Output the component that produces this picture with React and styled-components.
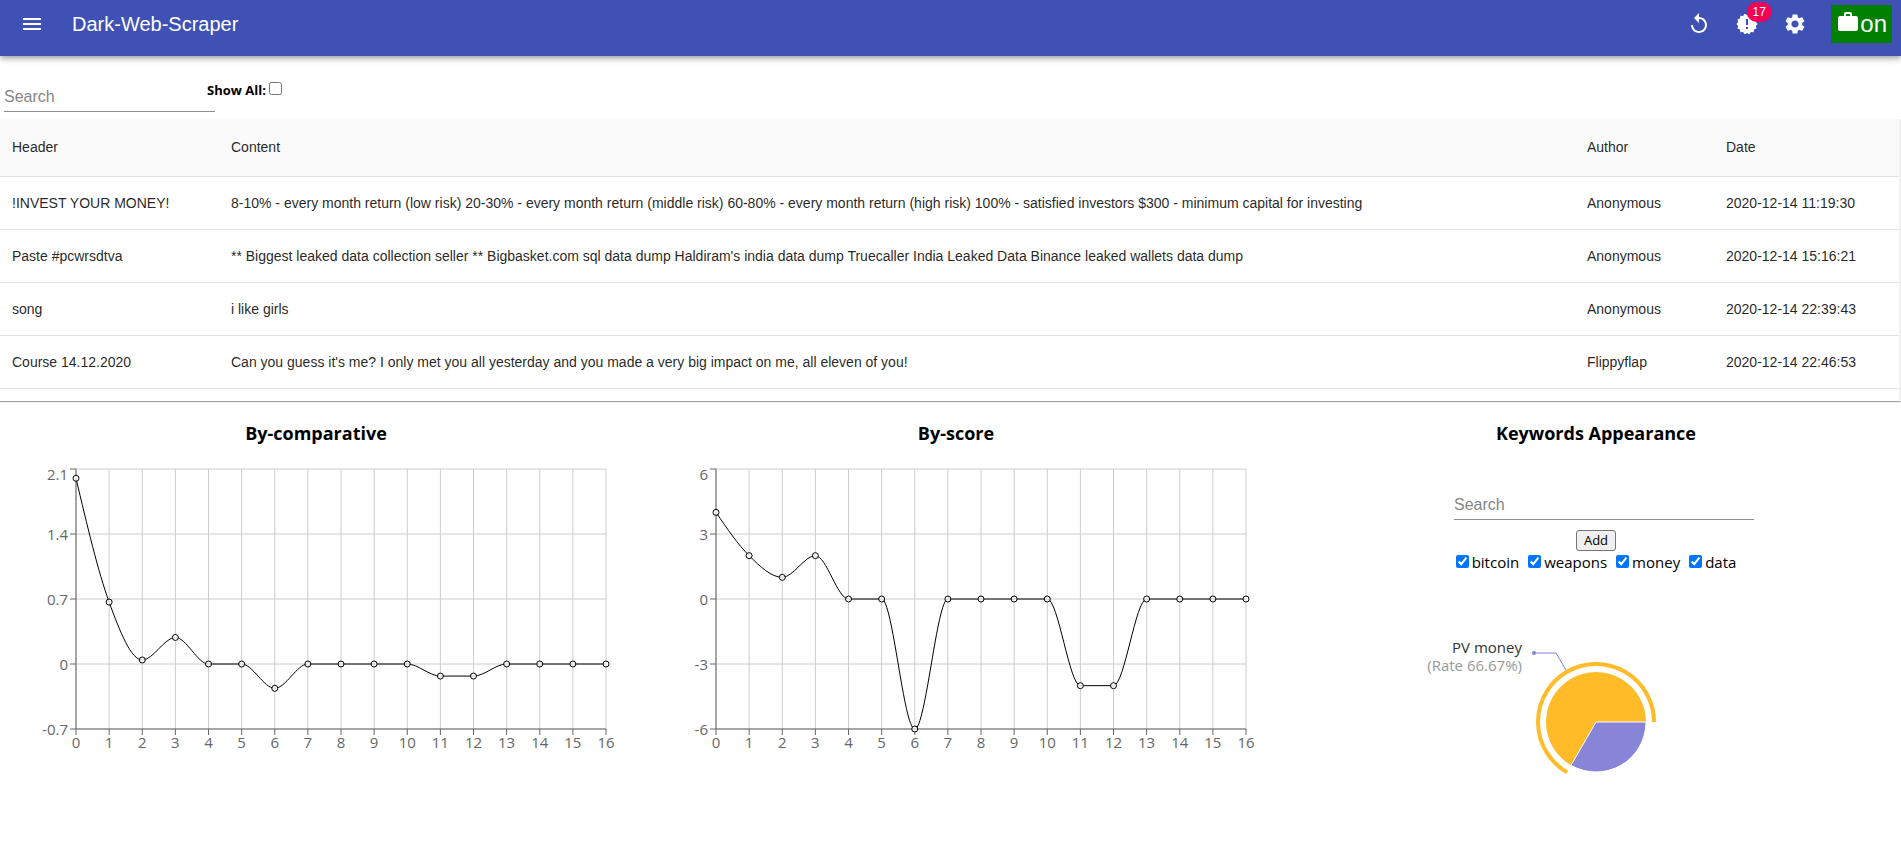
import React, { useState } from "react";
import styled, { createGlobalStyle } from "styled-components";
import { MdMenu, MdReplay, MdSettings, MdWork } from "react-icons/md";

const sans = `"Liberation Sans", Arial, sans-serif`;
const ui = `"Open Sans", "Noto Sans", sans-serif`;

const GlobalStyle = createGlobalStyle`
  * { box-sizing: border-box; }
  body { margin: 0; background: #fff; color: #000; font-family: ${ui}; font-size: 15px; }
`;

const AppBar = styled.header`
  position: relative;
  z-index: 1;
  display: flex;
  align-items: flex-start;
  height: 56px;
  padding: 0 9px 0 8px;
  background: #3f51b5;
  color: #fff;
  box-shadow: 0 2px 4px -1px rgba(0, 0, 0, 0.2), 0 4px 5px 0 rgba(0, 0, 0, 0.14),
    0 1px 10px 0 rgba(0, 0, 0, 0.12);
`;

const IconButton = styled.button`
  display: flex;
  padding: 12px;
  border: 0;
  background: none;
  color: inherit;
  font-size: 24px;
  cursor: pointer;
`;

const BadgeAnchor = styled.span`
  position: relative;
  display: flex;
`;

const Badge = styled.span`
  position: absolute;
  top: 0;
  right: 0;
  height: 20px;
  min-width: 20px;
  padding: 0 6px;
  border-radius: 10px;
  background: #f50057;
  font: 12px/20px ${sans};
  transform: translate(50%, -50%);
`;

const Brand = styled.h1`
  flex: 1;
  margin: 0 0 0 16px;
  font: 20px/48px ${sans};
`;

const StatusButton = styled.button`
  display: flex;
  align-items: center;
  margin: 5px 0 0 12px;
  padding: 5px;
  border: 0;
  background: #008000;
  color: #fff;
  font: 24px/28px ${sans};
  cursor: pointer;

  svg { margin-bottom: 4px; }
`;

const FilterBar = styled.div`
  display: flex;
  align-items: flex-end;
  height: 63px;
  padding: 0 4px 7px;
`;

const SearchInput = styled.input`
  display: block;
  width: ${(p) => p.$width};
  height: 32px;
  padding: 8px 0 5px;
  border: 0;
  border-bottom: 1px solid #8e8e8e;
  border-radius: 0;
  background: none;
  font: 16px/19px ${sans};
  outline: none;

  &::placeholder { color: #868686; opacity: 1; }
`;

const ShowAll = styled.label`
  display: flex;
  align-items: center;
  gap: 3px;
  margin: 0 0 12px -8px;
  font-size: 13px;
  line-height: 20px;
  font-weight: 700;

  input { margin: 0 0 3px; }
`;

const TableScroller = styled.div`
  height: 283px;
  overflow: hidden;
  border-right: 2px solid #f1f1f1;
  border-bottom: 1px solid #9ea09e;
  box-shadow: 0 1px 1px rgba(0, 0, 0, 0.06);
`;

const Table = styled.table`
  width: 100%;
  border-collapse: separate;
  border-spacing: 0;
  table-layout: fixed;
  color: rgba(0, 0, 0, 0.87);
  font: 14px/20px ${sans};

  th, td {
    padding: 16px 12px;
    border-bottom: 1px solid #e0e0e0;
    text-align: left;
    font-weight: 400;
    white-space: nowrap;
  }
  th { background: #fafafa; line-height: 25px; }
`;

const Column = styled.col`
  width: ${(p) => p.$width};
`;

const Panels = styled.main`
  display: grid;
  grid-template-columns: repeat(3, 1fr);
  gap: 30px;
  padding-left: 11px;
`;

const Panel = styled.section`
  display: flex;
  flex-direction: column;
  align-items: ${(p) => (p.$centered ? "center" : "stretch")};
`;

const PanelTitle = styled.h3`
  margin: 18px 0;
  font-size: 18px;
  line-height: 26px;
  text-align: center;
`;

const ChartSvg = styled.svg`
  display: block;
  width: 100%;
  max-width: ${(p) => p.$maxWidth};
  overflow: visible;
  font-family: ${ui};
  font-size: 15px;
`;

const KeywordForm = styled.form`
  display: flex;
  flex-direction: column;
  align-items: center;
  gap: 10px;
  padding-top: 24px;

  input { margin-left: 16px; }
`;

const AddButton = styled.button`
  height: 21px;
  width: 40px;
  padding: 0;
  border: 1px solid #767676;
  border-radius: 3px;
  background: #efefef;
  color: #000;
  font: 13px/17px ${ui};
`;

const KeywordList = styled.div`
  display: flex;
  gap: 9px;
  height: 23px;
`;

const Keyword = styled.label`
  display: flex;
  align-items: center;
  gap: 3px;
  line-height: 23px;

  input { margin: 0 0 2px; }
`;

const posts = [
  ["!INVEST YOUR MONEY!", "8-10% - every month return (low risk) 20-30% - every month return (middle risk) 60-80% - every month return (high risk) 100% - satisfied investors $300 - minimum capital for investing", "Anonymous", "2020-12-14 11:19:30"],
  ["Paste #pcwrsdtva", "** Biggest leaked data collection seller ** Bigbasket.com sql data dump Haldiram's india data dump Truecaller India Leaked Data Binance leaked wallets data dump", "Anonymous", "2020-12-14 15:16:21"],
  ["song", "i like girls", "Anonymous", "2020-12-14 22:39:43"],
  ["Course 14.12.2020", "Can you guess it's me? I only met you all yesterday and you made a very big impact on me, all eleven of you!", "Flippyflap", "2020-12-14 22:46:53"],
];

const comparative = [2, 0.667, 0.043, 0.286, 0, 0, -0.262, 0, 0, 0, 0, -0.13, -0.13, 0, 0, 0, 0];
const score = [4, 2, 1, 2, 0, 0, -6, 0, 0, 0, 0, -4, -4, 0, 0, 0, 0];

const PLOT = { left: 65, top: 5, width: 530, height: 260 };

// Scalloped seal with an exclamation mark.
const SEAL_TIPS = 14;
const sealPoints = Array.from({ length: SEAL_TIPS * 2 }, (_, i) => {
  const r = i % 2 ? 9 : 10.6;
  const a = (Math.PI * i) / SEAL_TIPS;
  return `${12 + r * Math.cos(a)},${12 + r * Math.sin(a)}`;
}).join(" ");

function AlertSeal() {
  return (
    <svg width="24" height="24" viewBox="0 0 24 24" aria-hidden="true">
      <polygon points={sealPoints} fill="currentColor" />
      <path d="M11 7h2v6h-2zM11 15h2v2h-2z" fill="#3f51b5" />
    </svg>
  );
}

// Monotone cubic interpolation through evenly spaced points.
function monotonePath(points) {
  const n = points.length;
  const slope = (i) => (points[i + 1][1] - points[i][1]) / (points[i + 1][0] - points[i][0]);
  const tangents = points.map((_, i) => {
    if (i === 0 || i === n - 1) return 0;
    const a = slope(i - 1);
    const b = slope(i);
    return (Math.sign(a) + Math.sign(b)) * Math.min(Math.abs(a), Math.abs(b), Math.abs(a + b) / 4);
  });
  tangents[0] = (3 * slope(0) - tangents[1]) / 2;
  tangents[n - 1] = (3 * slope(n - 2) - tangents[n - 2]) / 2;
  let d = `M${points[0][0]},${points[0][1]}`;
  for (let i = 1; i < n; i++) {
    const [x0, y0] = points[i - 1];
    const [x1, y1] = points[i];
    const dx = (x1 - x0) / 3;
    d += `C${x0 + dx},${y0 + dx * tangents[i - 1]},${x1 - dx},${y1 - dx * tangents[i]},${x1},${y1}`;
  }
  return d;
}

function LineChart({ label, values, ticks }) {
  const { left, top, width, height } = PLOT;
  const right = left + width;
  const bottom = top + height;
  const max = ticks[0];
  const min = ticks[ticks.length - 1];
  const x = (i) => left + (width * i) / (values.length - 1);
  const y = (v) => top + (height * (max - v)) / (max - min);
  const points = values.map((v, i) => [x(i), y(v)]);
  return (
    <ChartSvg $maxWidth="600px" viewBox="0 0 600 300" role="img" aria-label={label}>
      <g stroke="#ccc">
        {ticks.map((t) => <line key={t} x1={left} x2={right} y1={y(t)} y2={y(t)} />)}
        {values.map((_, i) => <line key={i} x1={x(i)} x2={x(i)} y1={top} y2={bottom} />)}
      </g>
      <g stroke="#666">
        <line x1={left} x2={right} y1={bottom} y2={bottom} />
        <line x1={left} x2={left} y1={top} y2={bottom} />
        {values.map((_, i) => <line key={i} x1={x(i)} x2={x(i)} y1={bottom} y2={bottom + 6} />)}
        {ticks.map((t) => <line key={t} x1={left - 6} x2={left} y1={y(t)} y2={y(t)} />)}
      </g>
      <g fill="#666">
        {values.map((_, i) => (
          <text key={i} x={x(i)} y={bottom + 19} textAnchor="middle">{i}</text>
        ))}
        {ticks.map((t) => (
          <text key={t} x={left - 8} y={Math.max(y(t), 10) + 6} textAnchor="end">{t}</text>
        ))}
      </g>
      <path d={monotonePath(points)} fill="none" stroke="#000" />
      {points.map(([cx, cy], i) => (
        <circle key={i} cx={cx} cy={cy} r="3" fill="#fff" fillOpacity="0.8" stroke="#000" />
      ))}
    </ChartSvg>
  );
}

function arc(cx, cy, r, from, to) {
  const pt = (a) => [cx + r * Math.cos((a * Math.PI) / 180), cy - r * Math.sin((a * Math.PI) / 180)];
  const [x0, y0] = pt(from);
  const [x1, y1] = pt(to);
  return `${x0},${y0}A${r},${r},0,${to - from > 180 ? 1 : 0},0,${x1},${y1}`;
}

function KeywordPie() {
  const cx = 200;
  const cy = 148;
  return (
    <ChartSvg $maxWidth="400px" viewBox="0 0 400 220" role="img" aria-label="Keyword share">
      <path d={`M${cx},${cy}L${arc(cx, cy, 50, 0, 240)}Z`} fill="#ffbb28" />
      <path d={`M${cx},${cy}L${arc(cx, cy, 50, 240, 360)}Z`} fill="#8884d8" stroke="#fff" />
      <path d={`M${arc(cx, cy, 58, 0, 240)}`} fill="none" stroke="#ffbb28" strokeWidth="4" />
      <path d={`M${cx - 30},${cy - 52}L${cx - 40},${cy - 69}H${cx - 62}`} fill="none" stroke="#8884d8" />
      <circle cx={cx - 62} cy={cy - 69} r="2" fill="#8884d8" />
      <text x={cx - 74} y={cy - 69} textAnchor="end" fill="#333">PV money</text>
      <text x={cx - 74} y={cy - 51} textAnchor="end" fill="#999">(Rate 66.67%)</text>
    </ChartSvg>
  );
}

export default function App() {
  const [showAll, setShowAll] = useState(false);
  return (
    <>
      <GlobalStyle />
      <AppBar>
        <IconButton aria-label="Menu"><MdMenu /></IconButton>
        <Brand>Dark-Web-Scraper</Brand>
        <IconButton aria-label="Reload"><MdReplay /></IconButton>
        <IconButton aria-label="Alerts">
          <BadgeAnchor><AlertSeal /><Badge>17</Badge></BadgeAnchor>
        </IconButton>
        <IconButton aria-label="Settings"><MdSettings /></IconButton>
        <StatusButton><MdWork />on</StatusButton>
      </AppBar>
      <FilterBar>
        <SearchInput $width="211px" placeholder="Search" aria-label="Search posts" />
        <ShowAll>
          Show All:
          <input type="checkbox" checked={showAll} onChange={(e) => setShowAll(e.target.checked)} />
        </ShowAll>
      </FilterBar>
      <TableScroller>
        <Table>
          <colgroup>
            <Column $width="219px" />
            <Column />
            <Column $width="139px" />
            <Column $width="185px" />
          </colgroup>
          <thead>
            <tr><th>Header</th><th>Content</th><th>Author</th><th>Date</th></tr>
          </thead>
          <tbody>
            {posts.map((row) => (
              <tr key={row[3]}>{row.map((cell, i) => <td key={i}>{cell}</td>)}</tr>
            ))}
          </tbody>
        </Table>
      </TableScroller>
      <Panels>
        <Panel>
          <PanelTitle>By-comparative</PanelTitle>
          <LineChart label="By-comparative" values={comparative} ticks={[2.1, 1.4, 0.7, 0, -0.7]} />
        </Panel>
        <Panel>
          <PanelTitle>By-score</PanelTitle>
          <LineChart label="By-score" values={score} ticks={[6, 3, 0, -3, -6]} />
        </Panel>
        <Panel $centered>
          <PanelTitle>Keywords Appearance</PanelTitle>
          <KeywordForm onSubmit={(e) => e.preventDefault()}>
            <SearchInput $width="300px" placeholder="Search" aria-label="Keyword" />
            <AddButton>Add</AddButton>
          </KeywordForm>
          <KeywordList>
            {["bitcoin", "weapons", "money", "data"].map((word) => (
              <Keyword key={word}><input type="checkbox" defaultChecked />{word}</Keyword>
            ))}
          </KeywordList>
          <KeywordPie />
        </Panel>
      </Panels>
    </>
  );
}
